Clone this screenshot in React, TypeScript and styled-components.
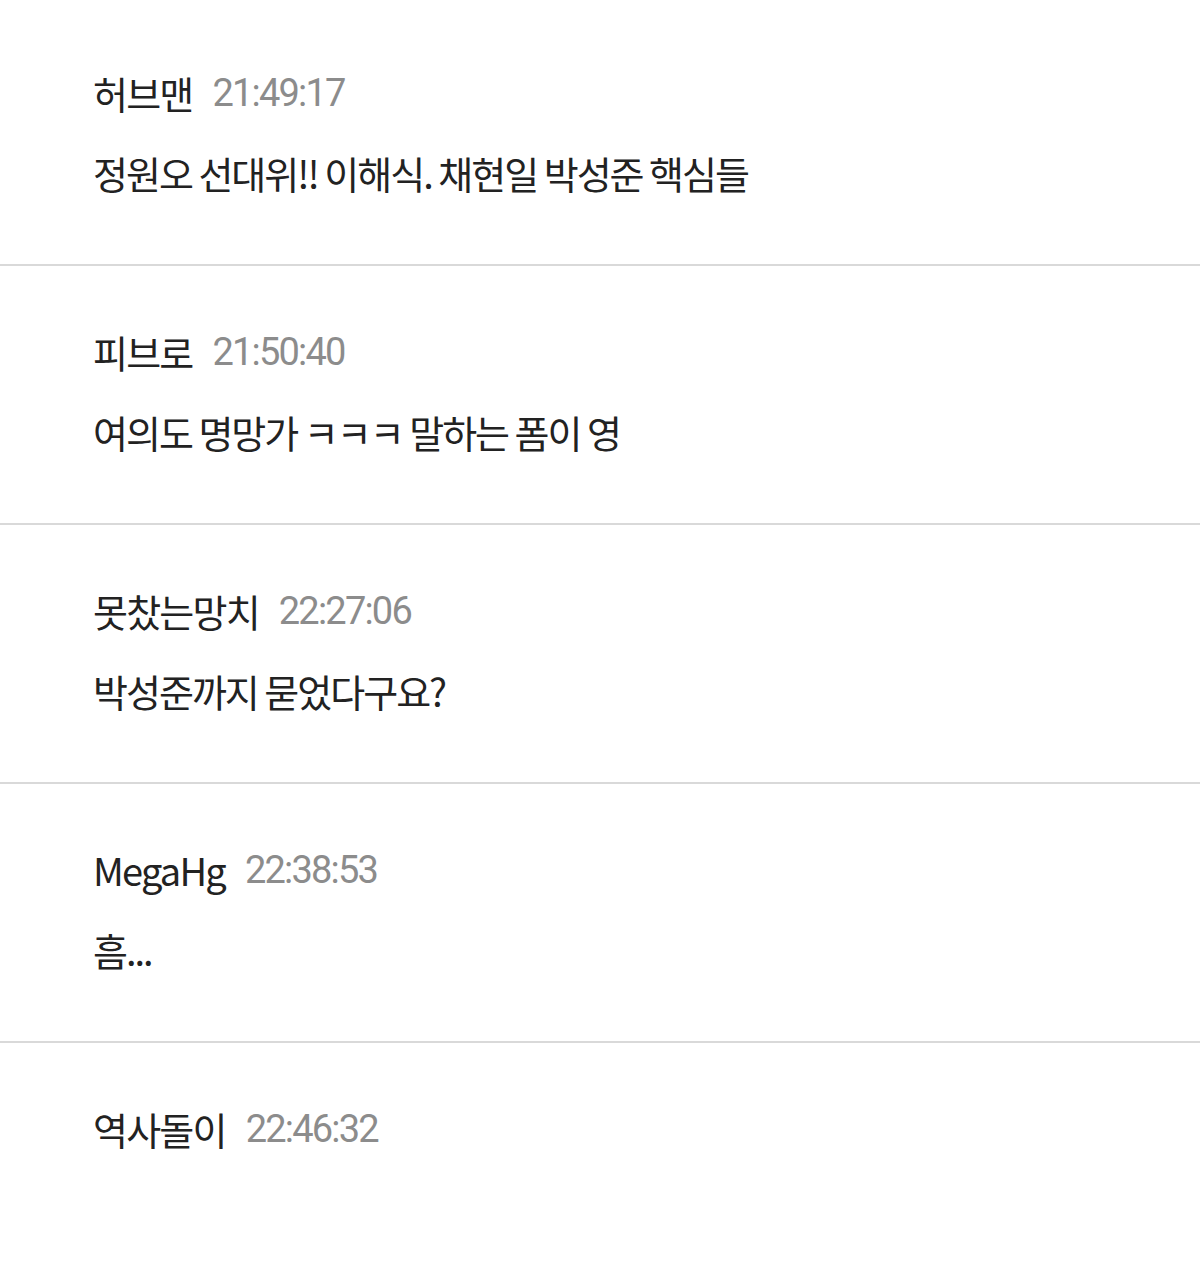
import React from "react";
import styled, { createGlobalStyle } from "styled-components";

const Global = createGlobalStyle`
  html, body { margin: 0; padding: 0; background: #ffffff; }
  body { font-family: "Noto Sans CJK KR", "Noto Sans", sans-serif; }
`;

const List = styled.div`
  padding-top: 7px;
  display: flex;
  flex-direction: column;
`;

const Row = styled.div`
  height: 257px;
  box-sizing: content-box;
  padding: 0 93px;
  border-bottom: 2px solid #d9d9d9;
  display: flex;
  flex-direction: column;
  &:last-child { border-bottom: none; }
`;

const Header = styled.div`
  margin-top: 64px;
  display: flex;
  align-items: center;
  gap: 20px;
  height: 44px;
`;

const Name = styled.span`
  font-family: "Noto Sans CJK KR", sans-serif;
  font-size: 38px;
  letter-spacing: -1.8px;
  color: #222222;
  line-height: 44px;
`;

const Time = styled.span`
  font-family: Roboto, "Liberation Sans", sans-serif;
  font-size: 38px;
  letter-spacing: -1.8px;
  color: #8c8c8c;
  line-height: 44px;
`;

const Message = styled.div`
  margin-top: 36px;
  font-family: "Noto Sans CJK KR", sans-serif;
  font-size: 38px;
  letter-spacing: -2px;
  color: #222222;
  line-height: 44px;
`;

const data = [
  { name: "허브맨", time: "21:49:17", text: "정원오 선대위!! 이해식. 채현일 박성준 핵심들" },
  { name: "피브로", time: "21:50:40", text: "여의도 명망가 ㅋㅋㅋ 말하는 폼이 영" },
  { name: "못찼는망치", time: "22:27:06", text: "박성준까지 묻었다구요?" },
  { name: "MegaHg", time: "22:38:53", text: "흠..." },
  { name: "역사돌이", time: "22:46:32", text: "" },
];

export default function App() {
  return (
    <>
      <Global />
      <List>
        {data.map((d, i) => (
          <Row key={i}>
            <Header>
              <Name>{d.name}</Name>
              <Time>{d.time}</Time>
            </Header>
            {d.text && <Message>{d.text}</Message>}
          </Row>
        ))}
      </List>
    </>
  );
}
